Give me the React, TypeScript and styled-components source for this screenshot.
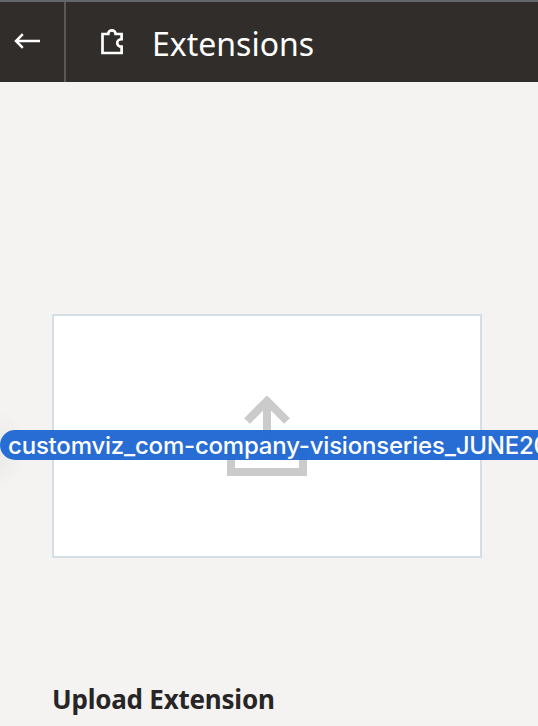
import React from "react";
import styled, { createGlobalStyle } from "styled-components";

const GlobalStyle = createGlobalStyle`
  body {
    margin: 0;
    background: #f4f3f1;
    font-family: "Noto Sans", "Open Sans", sans-serif;
  }
`;

const Page = styled.main`
  height: 726px;
  box-sizing: border-box;
  overflow: hidden;
  background: #f4f3f1;
  display: flex;
  flex-direction: column;
`;

const Header = styled.header`
  height: 82px;
  flex: none;
  box-sizing: border-box;
  border-top: 2px solid #62666a;
  background: #312d2a;
  color: #fff;
  display: flex;
  align-items: stretch;
`;

const BackButton = styled.button`
  width: 66px;
  padding: 0 0 2px 14px;
  border: 0;
  border-right: 2px solid #5b5754;
  background: transparent;
  color: inherit;
  display: flex;
  align-items: center;
`;

const Heading = styled.div`
  display: flex;
  align-items: center;
  gap: 27px;
  padding-left: 35px;
`;

const Title = styled.h1`
  margin: 0;
  padding-top: 4px;
  font-size: 32px;
  line-height: 44px;
  font-weight: 400;
  letter-spacing: 0;
`;

const Content = styled.section`
  position: relative;
  flex: 1;
  display: flex;
  flex-direction: column;
  padding: 232px 56px 0 52px;
`;

const DropZone = styled.div`
  height: 244px;
  flex: none;
  box-sizing: border-box;
  border: 2px solid #d5dee6;
  background: #fff;
  display: flex;
  align-items: center;
  justify-content: center;
`;

const Caption = styled.h2`
  margin: 123px 0 0;
  color: #272525;
  font-size: 26px;
  line-height: 36px;
  font-weight: 700;
  letter-spacing: -0.22px;
  white-space: nowrap;
`;

const DragShadow = styled.div`
  position: absolute;
  left: -40px;
  top: 326px;
  width: 68px;
  height: 84px;
  background: radial-gradient(closest-side, rgba(0, 0, 0, 0.045), transparent);
`;

const DraggedFile = styled.div`
  position: absolute;
  left: 0;
  top: 348px;
  width: 640px;
  height: 30px;
  box-sizing: border-box;
  padding-left: 8px;
  border-radius: 15px;
  background: rgba(33, 104, 211, 0.97);
  color: #fff;
  font: 500 24px/32px Inter, sans-serif;
  letter-spacing: -0.2px;
  white-space: nowrap;
`;

const BackIcon = () => (
  <svg width="27" height="16" viewBox="0 0 27 16" fill="none" stroke="currentColor" strokeWidth="2.5">
    <path d="M26 8H2M8.8 1.2L2 8l6.8 6.8" />
  </svg>
);

const PuzzleIcon = () => (
  <svg width="24" height="28" viewBox="0 0 24 28" fill="none" stroke="currentColor" strokeWidth="2.7">
    <path d="M1.5 6H7.2C7.2 1.1 14.6 1.1 14.6 6H20.6V11.2C14.8 11.2 14.8 18.6 20.6 18.6V25H1.5Z" />
  </svg>
);

const UploadIcon = () => (
  <svg width="80" height="80" viewBox="0 0 80 80" fill="none" stroke="#cbcbcb" strokeWidth="8">
    <path d="M40 60V6M20 25L40 5L60 25M4 50V76H76V50" />
  </svg>
);

export default function App() {
  return (
    <>
      <GlobalStyle />
      <Page>
        <Header>
          <BackButton aria-label="Back"><BackIcon /></BackButton>
          <Heading><PuzzleIcon /><Title>Extensions</Title></Heading>
        </Header>
        <Content>
          <DropZone><UploadIcon /></DropZone>
          <Caption>Upload Extension</Caption>
          <DragShadow />
          <DraggedFile>customviz_com-company-visionseries_JUNE20</DraggedFile>
        </Content>
      </Page>
    </>
  );
}
